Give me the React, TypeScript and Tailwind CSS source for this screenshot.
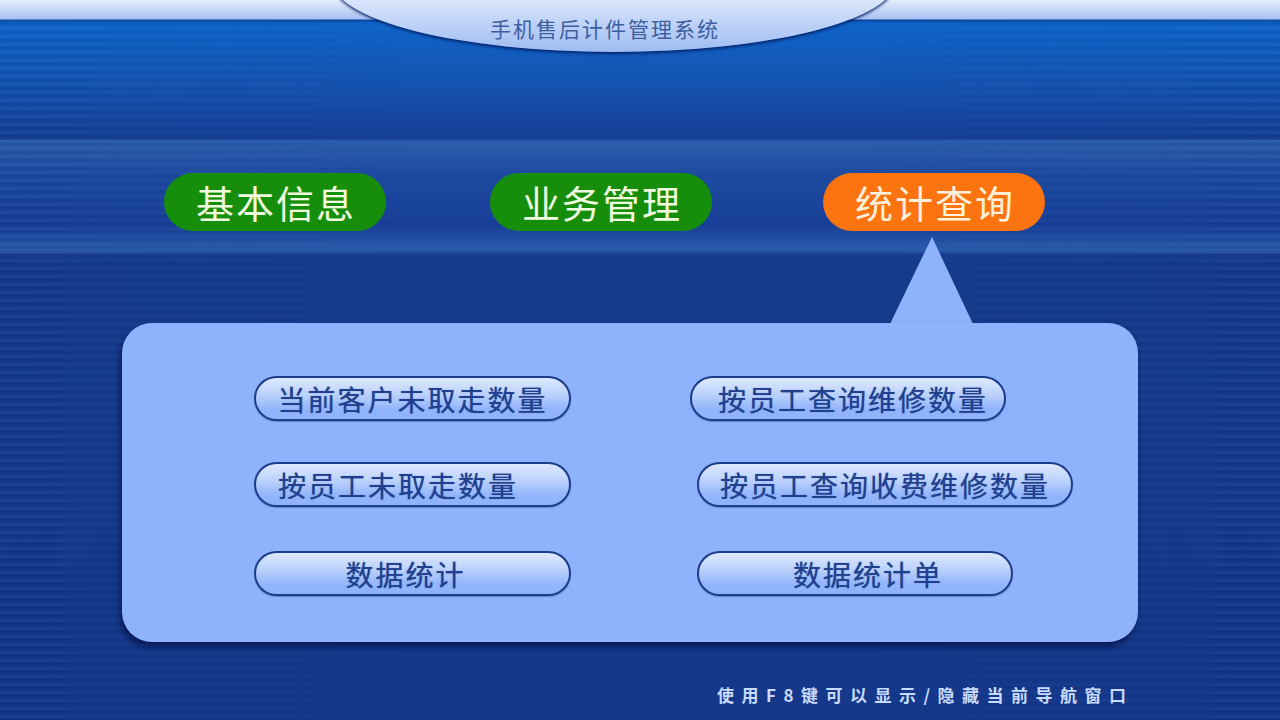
import React from "react";

const LEFT_ITEMS = [
  { label: "当前客户未取走数量", className: "w-[317px]" },
  { label: "按员工未取走数量", className: "w-[317px] mt-[41px] justify-start pl-[22px]" },
  { label: "数据统计", className: "w-[317px] mt-[44px] pr-[14px]" },
];

const RIGHT_ITEMS = [
  { label: "按员工查询维修数量", className: "w-[316px] pl-[10px]" },
  { label: "按员工查询收费维修数量", className: "w-[376px] ml-[7px] mt-[41px]" },
  { label: "数据统计单", className: "w-[316px] ml-[7px] mt-[44px] pl-[26px]" },
];

function Tab({ label, active }: { label: string; active?: boolean }) {
  return (
    <div
      className={`flex h-[58px] w-[222px] items-center justify-center rounded-full pl-[2px] text-[38px] leading-none tracking-[2px] ${
        active
          ? "bg-[#fc7410] text-[#fff1dc]"
          : "bg-[#178e0b] text-[#effcdf]"
      }`}
    >
      {label}
    </div>
  );
}

function MenuButton({ label, className }: { label: string; className: string }) {
  return (
    <button
      className={`flex h-[45px] items-center justify-center rounded-full border-2 border-[#1b3d8c]
        bg-[linear-gradient(to_bottom,#dde8fe_0%,#bcd2fc_40%,#93b5fb_75%,#8eb2fb_100%)]
        text-[28px] leading-none tracking-[2px] text-[#203f8e]
        [text-shadow:0_0_1px_rgba(32,63,142,0.7)] shadow-[0_1px_1px_rgba(20,40,110,0.35)] ${className}`}
    >
      {label}
    </button>
  );
}

export default function App() {
  return (
    <div
      className="relative h-[720px] w-[1280px] overflow-hidden font-['Noto_Sans_CJK_SC',sans-serif]
        bg-[linear-gradient(to_bottom,#e4edfd_0px,#a8c2f2_19px,#0a3e98_20px,#0f64c9_23px,#1456b4_75px,#173f96_139px,#2c5eac_141px,#1d4aa0_175px,#183f97_225px,#2b5bab_250px,#1a3f92_254px,#163a8c_260px,#15388a_720px)]"
    >
      {/* background streaks */}
      <div
        className="pointer-events-none absolute inset-x-0 top-[20px] bottom-0
          bg-[repeating-linear-gradient(to_bottom,rgba(150,190,255,0.10)_0px,rgba(150,190,255,0.10)_1px,transparent_1px,transparent_3px,rgba(0,10,60,0.12)_3px,rgba(0,10,60,0.12)_5px,transparent_5px,transparent_8px)]
          [mask-image:linear-gradient(to_right,black_0%,transparent_32%,transparent_68%,black_100%)]"
      />

      {/* header */}
      <div className="relative h-[52px]">
        <div
          className="absolute left-[332px] top-[-92px] flex h-[144px] w-[564px] items-end justify-center rounded-[50%]
            bg-[linear-gradient(to_bottom,#ffffff_0%,#e9f0fe_55%,#b7cdf6_85%,#9ebcf2_100%)]
            shadow-[0_2px_3px_rgba(5,30,100,0.9)]"
        >
          <span className="mb-[13px] mr-[18px] text-[21px] leading-none tracking-[2px] text-[#3d5f9f]">
            手机售后计件管理系统
          </span>
        </div>
      </div>

      {/* tabs */}
      <div className="relative mt-[121px] flex pl-[164px]">
        <Tab label="基本信息" />
        <div className="ml-[104px]">
          <Tab label="业务管理" />
        </div>
        <div className="ml-[111px]">
          <Tab label="统计查询" active />
        </div>
      </div>

      {/* pointer */}
      <div className="relative mt-[6px] -mb-px pl-[890px]">
        <svg width="83" height="87" viewBox="0 0 83 87" className="block">
          <polygon points="42,0 0,87 83,87" fill="#8eb2fb" />
        </svg>
      </div>

      {/* panel */}
      <div className="relative ml-[122px] h-[319px] w-[1016px] rounded-[30px] bg-[#8eb2fb] shadow-[-2px_5px_6px_rgba(4,18,70,0.75)]">
        <div className="flex pl-[132px] pt-[53px]">
          <div className="flex flex-col items-start">
            {LEFT_ITEMS.map((item) => (
              <MenuButton key={item.label} label={item.label} className={item.className} />
            ))}
          </div>
          <div className="ml-[119px] flex flex-col items-start">
            {RIGHT_ITEMS.map((item) => (
              <MenuButton key={item.label} label={item.label} className={item.className} />
            ))}
          </div>
        </div>
      </div>

      {/* footer hint */}
      <div className="relative mt-[44px] pl-[717px] text-[17px] font-bold leading-none tracking-[7.5px] text-[#c8dbff]">
        使用F8键可以显示/隐藏当前导航窗口
      </div>
    </div>
  );
}
